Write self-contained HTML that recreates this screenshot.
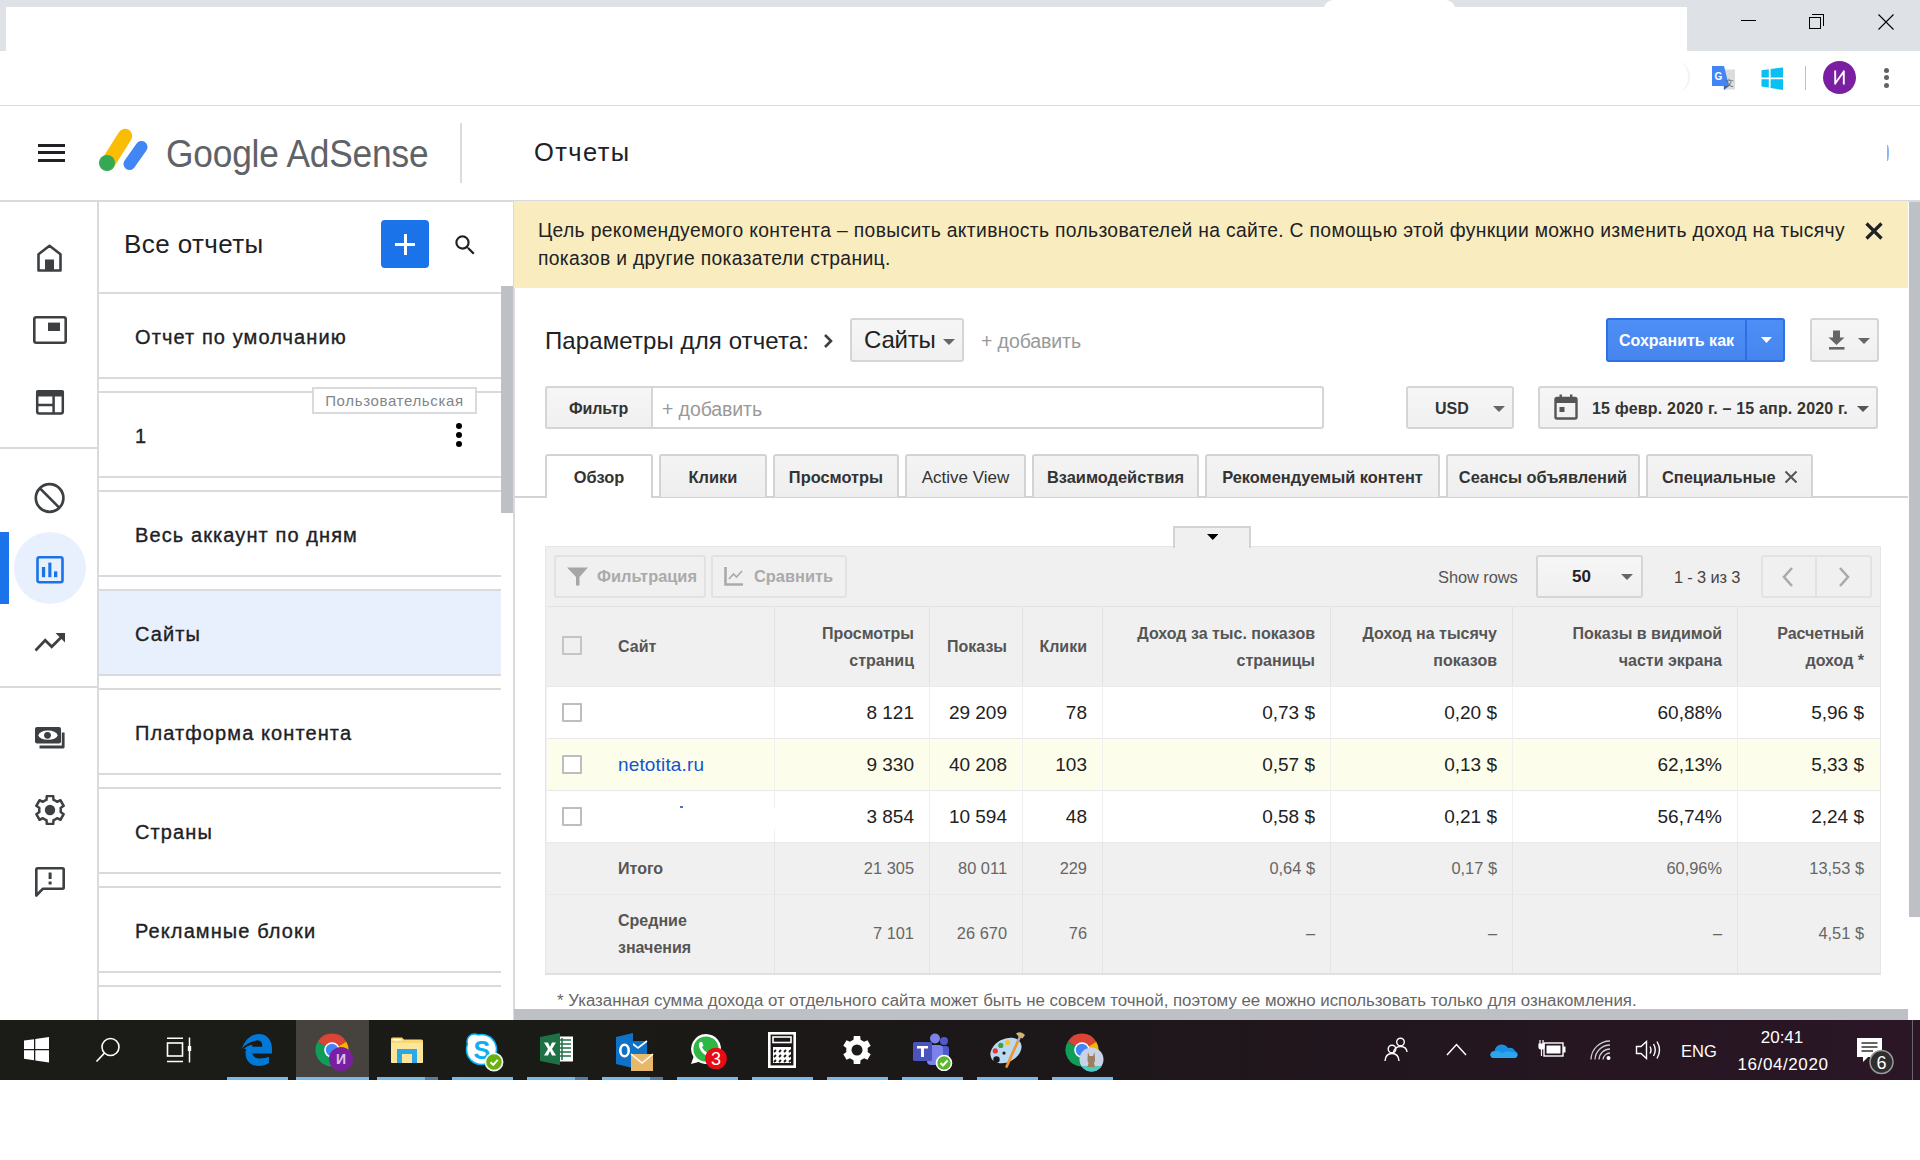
<!DOCTYPE html>
<html><head><meta charset="utf-8">
<style>
*{box-sizing:border-box;margin:0;padding:0}
html,body{width:1920px;height:1160px;overflow:hidden;background:#fff;font-family:"Liberation Sans",sans-serif;color:#202124}
.a{position:absolute}
.t{position:absolute;white-space:nowrap;line-height:1}
svg{display:block}
</style></head><body>
<!-- ===== BROWSER CHROME ===== -->
<div class="a" style="left:0;top:0;width:1920px;height:7px;background:#dee1e6"></div>
<div class="a" style="left:0;top:0;width:6px;height:51px;background:#dee1e6"></div>
<div class="a" style="left:1687px;top:0;width:233px;height:51px;background:#dee1e6"></div>
<div class="a" style="left:1324px;top:0;width:131px;height:10px;background:#fff;border-radius:9px 9px 0 0"></div>
<!-- window controls -->
<div class="a" style="left:1741px;top:20px;width:15px;height:1px;background:#000"></div>
<div class="a" style="left:1809px;top:17px;width:12px;height:12px;border:1px solid #000"></div>
<div class="a" style="left:1812px;top:14px;width:12px;height:12px;border-top:1px solid #000;border-right:1px solid #000"></div>
<svg class="a" style="left:1878px;top:14px" width="16" height="16"><path d="M0.5 0.5L15.5 15.5M15.5 0.5L0.5 15.5" stroke="#000" stroke-width="1.1"/></svg>
<!-- toolbar -->
<div class="a" style="left:1666px;top:62px;width:24px;height:30px;border-radius:50%;border-right:2px solid #f1f3f4"></div>
<svg class="a" style="left:1711px;top:65px" width="26" height="26" viewBox="0 0 26 26">
 <rect x="12" y="4.5" width="12" height="20" fill="#dcdcdc"/>
 <path d="M1 1H13L18 21H1Z" fill="#4285f4"/>
 <path d="M13 21L18 21L13 25Z" fill="#3367d6"/>
 <text x="7.5" y="15" font-size="10" font-weight="bold" fill="#fff" text-anchor="middle" font-family="Liberation Sans">G</text>
 <text x="18.5" y="21" font-size="9" fill="#5f6368" text-anchor="middle" font-family="Liberation Sans">文</text>
</svg>
<svg class="a" style="left:1761px;top:67px" width="23" height="24" viewBox="0 0 23 24"><path d="M0.5 3.2L7.8 2.3V10.5H0.5Z M9.6 2L22 0.5V10.5H9.6Z M0.5 12.3H7.8V20.6L0.5 19.6Z M9.6 12.3H22V23L9.6 21Z" fill="#0ac0f2"/></svg>
<div class="a" style="left:1805px;top:66px;width:1px;height:24px;background:#bdc1c6"></div>
<div class="a" style="left:1823px;top:61px;width:33px;height:33px;border-radius:50%;background:#7b1fa2"></div>
<svg class="a" style="left:1833px;top:70px" width="13" height="15" viewBox="0 0 13 15"><path d="M2.2 0.5V14.5M10.8 0.5V14.5M2.2 13.5L10.8 1.5" stroke="#fff" stroke-width="1.9" fill="none"/></svg>
<div class="a" style="left:1884px;top:68px;width:5px;height:5px;border-radius:50%;background:#5f6368"></div>
<div class="a" style="left:1884px;top:75px;width:5px;height:5px;border-radius:50%;background:#5f6368"></div>
<div class="a" style="left:1884px;top:83px;width:5px;height:5px;border-radius:50%;background:#5f6368"></div>
<div class="a" style="left:0;top:105px;width:1920px;height:1px;background:#dadce0"></div>

<!-- ===== ADSENSE HEADER ===== -->
<div class="a" style="left:37.5px;top:144px;width:27px;height:3px;background:#202124"></div>
<div class="a" style="left:37.5px;top:151px;width:27px;height:3px;background:#202124"></div>
<div class="a" style="left:37.5px;top:159px;width:27px;height:3px;background:#202124"></div>
<svg class="a" style="left:97px;top:126px" width="52" height="48" viewBox="0 0 52 48">
 <line x1="28" y1="10" x2="11" y2="37" stroke="#fbbc04" stroke-width="14.5" stroke-linecap="round"/>
 <line x1="44.5" y1="21" x2="32.5" y2="38" stroke="#4285f4" stroke-width="12" stroke-linecap="round"/>
 <circle cx="10" cy="37" r="8" fill="#34a853"/>
</svg>
<div class="t" style="left:166px;top:135px;font-size:38px;color:#5f6368;letter-spacing:-0.2px;transform:scaleX(0.929);transform-origin:0 0">Google AdSense</div>
<div class="a" style="left:460px;top:123px;width:2px;height:60px;background:#dadce0"></div>
<div class="t" style="left:534px;top:140px;font-size:25.5px;color:#202124;letter-spacing:1.4px">Отчеты</div>
<div class="a" style="left:1886px;top:145px;width:3px;height:16px;border-right:2px solid #8ab4f8;border-radius:0 50% 50% 0"></div>
<div class="a" style="left:0;top:200px;width:1920px;height:2px;background:#d9dadd"></div>

<!-- LEFT RAIL -->
<div class="a" style="left:97px;top:202px;width:2px;height:818px;background:#d9dadd"></div>
<div class="a" style="left:0;top:447px;width:97px;height:2px;background:#d9dadd"></div>
<div class="a" style="left:0;top:686px;width:97px;height:2px;background:#d9dadd"></div>
<svg class="a" style="left:34px;top:242px" width="32" height="32" viewBox="0 0 32 32">
 <path d="M4.5 28.5V12.2L15.5 3.8L26.5 12.2V28.5Z" fill="none" stroke="#3c4043" stroke-width="2.6" stroke-linejoin="round"/>
 <rect x="11" y="17.5" width="9" height="11" fill="#3c4043"/>
</svg>
<svg class="a" style="left:32px;top:314px" width="36" height="32" viewBox="0 0 36 32">
 <rect x="2.3" y="3.3" width="31.4" height="25.4" rx="2" fill="none" stroke="#3c4043" stroke-width="2.6"/>
 <rect x="16" y="8.6" width="12" height="8.4" fill="#3c4043"/>
</svg>
<svg class="a" style="left:34px;top:388px" width="32" height="28" viewBox="0 0 32 28">
 <rect x="3.2" y="3.2" width="25.6" height="22.2" rx="2" fill="none" stroke="#3c4043" stroke-width="2.5"/>
 <rect x="2" y="2" width="28" height="6.5" rx="2" fill="#3c4043"/>
 <path d="M3 17H19.6M19.6 8V25" stroke="#3c4043" stroke-width="2.5"/>
</svg>
<svg class="a" style="left:33px;top:481px" width="34" height="34" viewBox="0 0 34 34">
 <circle cx="16.6" cy="17" r="13.8" fill="none" stroke="#3c4043" stroke-width="2.7"/>
 <path d="M7 7.4L26.2 26.6" stroke="#3c4043" stroke-width="2.7"/>
</svg>
<div class="a" style="left:0;top:532px;width:9px;height:72px;background:#1a73e8"></div>
<div class="a" style="left:14px;top:532px;width:72px;height:72px;border-radius:50%;background:#e8f0fe"></div>
<svg class="a" style="left:34px;top:554px" width="32" height="32" viewBox="0 0 32 32">
 <rect x="3.5" y="3.3" width="25" height="25" rx="2" fill="none" stroke="#1a73e8" stroke-width="2.6"/>
 <rect x="7.9" y="13" width="3.3" height="10.2" fill="#1a73e8"/>
 <rect x="14.3" y="8.6" width="3.1" height="14.6" fill="#1a73e8"/>
 <rect x="20" y="17.4" width="3.3" height="5.8" fill="#1a73e8"/>
</svg>
<svg class="a" style="left:33px;top:630px" width="34" height="24" viewBox="0 0 34 24">
 <path d="M2.5 20.5L12.2 10.2L18.7 16.8L30.5 5" fill="none" stroke="#3c4043" stroke-width="2.7"/>
 <path d="M22.5 3H32V12.5Z" fill="#3c4043"/>
</svg>
<svg class="a" style="left:33px;top:725px" width="34" height="26" viewBox="0 0 34 26">
 <rect x="2" y="2" width="26" height="16.5" rx="2" fill="#3c4043"/>
 <ellipse cx="15" cy="10.2" rx="9.5" ry="4.6" fill="#fff"/>
 <circle cx="14.5" cy="10.3" r="3.4" fill="#3c4043"/>
 <path d="M6.5 22H30.2V7.5" fill="none" stroke="#3c4043" stroke-width="2.8" stroke-linejoin="round"/>
</svg>
<svg class="a" style="left:35px;top:795px" width="30" height="30" viewBox="0 0 30 30">
 <path d="M9.60 5.65 L11.48 4.79 L11.78 1.07 L18.22 1.07 L18.52 4.79 L20.40 5.65 L22.09 6.85 L25.46 5.25 L28.68 10.82 L25.60 12.94 L25.80 15.00 L25.60 17.06 L28.68 19.18 L25.46 24.75 L22.09 23.15 L20.40 24.35 L18.52 25.21 L18.22 28.93 L11.78 28.93 L11.48 25.21 L9.60 24.35 L7.91 23.15 L4.54 24.75 L1.32 19.18 L4.40 17.06 L4.20 15.00 L4.40 12.94 L1.32 10.82 L4.54 5.25 L7.91 6.85Z" fill="none" stroke="#3c4043" stroke-width="2.5" stroke-linejoin="round"/>
 <circle cx="15" cy="15" r="5.2" fill="#3c4043"/>
</svg>
<svg class="a" style="left:34px;top:866px" width="32" height="32" viewBox="0 0 32 32">
 <path d="M2.3 29.5V3.5Q2.3 2.3 3.5 2.3H28.5Q29.7 2.3 29.7 3.5V21.5Q29.7 22.7 28.5 22.7H9Z" fill="none" stroke="#3c4043" stroke-width="2.6" stroke-linejoin="round"/>
 <rect x="14.6" y="6.5" width="3" height="6.5" fill="#3c4043"/>
 <rect x="14.6" y="15.5" width="3" height="3" fill="#3c4043"/>
</svg>


<!-- SIDEBAR -->
<div class="a" style="left:99px;top:202px;width:414px;height:818px;background:#fff;overflow:hidden">
<div class="t" style="left:25px;top:29px;font-size:26px;color:#202124;letter-spacing:0.4px">Все отчеты</div>
<div class="a" style="left:282px;top:18px;width:48px;height:48px;border-radius:4px;background:#1a73e8"></div>
<div class="a" style="left:296px;top:41px;width:20px;height:3px;background:#fff"></div>
<div class="a" style="left:304.5px;top:32px;width:3px;height:21px;background:#fff"></div>
<svg class="a" style="left:352.5px;top:29.5px" width="26.5" height="26.5" viewBox="0 0 24 24"><path fill="#202124" d="M15.5 14h-.79l-.28-.27A6.47 6.47 0 0 0 16 9.5 6.5 6.5 0 1 0 9.5 16c1.61 0 3.09-.59 4.23-1.57l.27.28v.79l5 4.99L20.49 19l-4.99-5zm-6 0C7.01 14 5 11.990 5 9.5S7.01 5 9.5 5 14 7.01 14 9.5 11.99 14 9.5 14z"/></svg>
<div class="a" style="left:0;top:90px;width:402px;height:87px;border-top:2px solid #d9dadd;border-bottom:2px solid #d9dadd;background:#fff"></div>
<div class="t" style="left:36px;top:125.1px;font-size:20px;color:#202124;letter-spacing:1.1px;-webkit-text-stroke:0.35px #202124">Отчет по умолчанию</div>
<div class="a" style="left:0;top:189px;width:402px;height:87px;border-top:2px solid #d9dadd;border-bottom:2px solid #d9dadd;background:#fff"></div>
<div class="t" style="left:36px;top:224.1px;font-size:20px;color:#202124;letter-spacing:1.1px;-webkit-text-stroke:0.35px #202124">1</div>
<div class="a" style="left:213px;top:185px;width:165px;height:27px;border:2px solid #d9dadd;background:#fff"></div>
<div class="t" style="left:213px;top:191px;width:165px;text-align:center;font-size:15px;color:#80868b;letter-spacing:0.65px">Пользовательская</div>
<div class="a" style="left:357px;top:221px;width:6px;height:6px;border-radius:50%;background:#000"></div>
<div class="a" style="left:357px;top:230px;width:6px;height:6px;border-radius:50%;background:#000"></div>
<div class="a" style="left:357px;top:239px;width:6px;height:6px;border-radius:50%;background:#000"></div>
<div class="a" style="left:0;top:288px;width:402px;height:87px;border-top:2px solid #d9dadd;border-bottom:2px solid #d9dadd;background:#fff"></div>
<div class="t" style="left:36px;top:323.1px;font-size:20px;color:#202124;letter-spacing:1.1px;-webkit-text-stroke:0.35px #202124">Весь аккаунт по дням</div>
<div class="a" style="left:0;top:387px;width:402px;height:87px;border-top:2px solid #d9dadd;border-bottom:2px solid #d9dadd;background:#e8f0fe"></div>
<div class="t" style="left:36px;top:422.1px;font-size:20px;color:#202124;letter-spacing:1.1px;-webkit-text-stroke:0.35px #202124">Сайты</div>
<div class="a" style="left:0;top:486px;width:402px;height:87px;border-top:2px solid #d9dadd;border-bottom:2px solid #d9dadd;background:#fff"></div>
<div class="t" style="left:36px;top:521.1px;font-size:20px;color:#202124;letter-spacing:1.1px;-webkit-text-stroke:0.35px #202124">Платформа контента</div>
<div class="a" style="left:0;top:585px;width:402px;height:87px;border-top:2px solid #d9dadd;border-bottom:2px solid #d9dadd;background:#fff"></div>
<div class="t" style="left:36px;top:620.1px;font-size:20px;color:#202124;letter-spacing:1.1px;-webkit-text-stroke:0.35px #202124">Страны</div>
<div class="a" style="left:0;top:684px;width:402px;height:87px;border-top:2px solid #d9dadd;border-bottom:2px solid #d9dadd;background:#fff"></div>
<div class="t" style="left:36px;top:719.1px;font-size:20px;color:#202124;letter-spacing:1.1px;-webkit-text-stroke:0.35px #202124">Рекламные блоки</div>
<div class="a" style="left:0;top:783px;width:402px;height:87px;border-top:2px solid #d9dadd;border-bottom:2px solid #d9dadd;background:#fff"></div>
<div class="a" style="left:402px;top:84px;width:12px;height:227px;background:#bdc1c6"></div>
</div>
<div class="a" style="left:513px;top:202px;width:2px;height:818px;background:#d9dadd"></div>
<!-- MAIN -->
<div class="a" style="left:514px;top:201px;width:1394px;height:87px;background:#f9ecbe"></div>
<div class="t" style="left:538px;top:221.2px;font-size:19.3px;color:#202124;letter-spacing:0.34px">Цель рекомендуемого контента – повысить активность пользователей на сайте. С помощью этой функции можно изменить доход на тысячу</div>
<div class="t" style="left:538px;top:249.0px;font-size:19.3px;color:#202124;letter-spacing:0.34px">показов и другие показатели страниц.</div>
<svg class="a" style="left:1864px;top:221px" width="20" height="20" viewBox="0 0 20 20"><path d="M2.5 2.5L17.5 17.5M17.5 2.5L2.5 17.5" stroke="#202124" stroke-width="3.2"/></svg>
<div class="t" style="left:545px;top:328.7px;font-size:24px;color:#202124;letter-spacing:0.1px">Параметры для отчета:</div>
<svg class="a" style="left:822px;top:333px" width="12" height="16" viewBox="0 0 12 16"><path d="M3 2L9 8L3 14" fill="none" stroke="#3c4043" stroke-width="2.6"/></svg>
<div class="a" style="left:850px;top:318px;width:114px;height:44px;border:2px solid #d5d5d5;border-radius:3px;background:linear-gradient(#f6f6f6,#f0f0f0)"></div>
<div class="t" style="left:864px;top:327.7px;font-size:24px;color:#222;letter-spacing:-0.2px">Сайты</div>
<svg class="a" style="left:943px;top:339px" width="12" height="6" viewBox="0 0 12 6"><path d="M0 0H12L6.0 6Z" fill="#666"/></svg>
<div class="t" style="left:981px;top:331.5px;font-size:19.5px;color:#999;letter-spacing:-0.1px">+ добавить</div>
<div class="a" style="left:1606px;top:318px;width:179px;height:44px;background:linear-gradient(#4d8ff6,#4685ee);border:2px solid #2f6fe4;border-radius:3px"></div>
<div class="a" style="left:1745px;top:319px;width:2px;height:42px;background:#2f6fe4"></div>
<div class="t" style="left:1619px;top:332.5px;font-size:16px;color:#fff;font-weight:bold;">Сохранить как</div>
<svg class="a" style="left:1761px;top:337px" width="11" height="6" viewBox="0 0 11 6"><path d="M0 0H11L5.5 6Z" fill="#fff"/></svg>
<div class="a" style="left:1810px;top:318px;width:69px;height:44px;border:2px solid #d5d5d5;border-radius:3px;background:linear-gradient(#f6f6f6,#f0f0f0)"></div>
<svg class="a" style="left:1828px;top:330px" width="18" height="21" viewBox="0 0 18 21"><path d="M5 0.5H12V7.5H16.5L8.5 15L0.5 7.5H5Z" fill="#666"/><rect x="1" y="17" width="15.5" height="2.6" fill="#666"/></svg>
<svg class="a" style="left:1858px;top:338px" width="12" height="6" viewBox="0 0 12 6"><path d="M0 0H12L6.0 6Z" fill="#666"/></svg>
<div class="a" style="left:545px;top:386px;width:779px;height:43px;border:2px solid #d5d5d5;border-radius:3px;background:#fff"></div>
<div class="a" style="left:545px;top:386px;width:108px;height:43px;border:2px solid #d5d5d5;border-radius:3px 0 0 3px;background:linear-gradient(#f6f6f6,#f0f0f0)"></div>
<div class="t" style="left:569px;top:401.0px;font-size:16px;color:#333;font-weight:bold;letter-spacing:-0.1px">Фильтр</div>
<div class="t" style="left:662px;top:399.5px;font-size:19.5px;color:#999;letter-spacing:-0.1px">+ добавить</div>
<div class="a" style="left:1406px;top:386px;width:108px;height:43px;border:2px solid #d5d5d5;border-radius:3px;background:linear-gradient(#f6f6f6,#f0f0f0)"></div>
<div class="t" style="left:1435px;top:401.0px;font-size:16px;color:#333;font-weight:bold;">USD</div>
<svg class="a" style="left:1493px;top:406px" width="12" height="6" viewBox="0 0 12 6"><path d="M0 0H12L6.0 6Z" fill="#666"/></svg>
<div class="a" style="left:1538px;top:386px;width:340px;height:43px;border:2px solid #d5d5d5;border-radius:3px;background:linear-gradient(#f6f6f6,#f0f0f0)"></div>
<svg class="a" style="left:1553px;top:393px" width="26" height="28" viewBox="0 0 26 28"><rect x="2.5" y="5" width="21" height="20.5" rx="1.5" fill="none" stroke="#555" stroke-width="2.4"/><rect x="2" y="5" width="22" height="5" fill="#555"/><rect x="6.5" y="1.5" width="2.4" height="5" fill="#555"/><rect x="17" y="1.5" width="2.4" height="5" fill="#555"/><rect x="6.5" y="14" width="5" height="5" fill="#555"/></svg>
<div class="t" style="left:1592px;top:401.0px;font-size:16px;color:#333;font-weight:bold;letter-spacing:0.18px">15 февр. 2020 г. – 15 апр. 2020 г.</div>
<svg class="a" style="left:1857px;top:406px" width="12" height="6" viewBox="0 0 12 6"><path d="M0 0H12L6.0 6Z" fill="#555"/></svg>
<div class="a" style="left:515px;top:496px;width:1393px;height:2px;background:#d3d3d3"></div>
<div class="a" style="left:545px;top:454px;width:108px;height:44px;background:#fff;border:2px solid #d3d3d3;border-bottom:none;border-radius:3px 3px 0 0"></div>
<div class="t" style="left:545px;width:108px;text-align:center;top:469.4px;font-size:16.4px;color:#333;font-weight:bold;">Обзор</div>
<div class="a" style="left:659px;top:454px;width:108px;height:43px;background:linear-gradient(#f4f4f4,#eeeeee);border:2px solid #d3d3d3;border-bottom:none;border-radius:3px 3px 0 0"></div>
<div class="t" style="left:659px;width:108px;text-align:center;top:469.4px;font-size:16.4px;color:#333;font-weight:bold;">Клики</div>
<div class="a" style="left:773px;top:454px;width:126px;height:43px;background:linear-gradient(#f4f4f4,#eeeeee);border:2px solid #d3d3d3;border-bottom:none;border-radius:3px 3px 0 0"></div>
<div class="t" style="left:773px;width:126px;text-align:center;top:469.4px;font-size:16.4px;color:#333;font-weight:bold;">Просмотры</div>
<div class="a" style="left:905px;top:454px;width:121px;height:43px;background:linear-gradient(#f4f4f4,#eeeeee);border:2px solid #d3d3d3;border-bottom:none;border-radius:3px 3px 0 0"></div>
<div class="t" style="left:905px;width:121px;text-align:center;top:468.9px;font-size:17px;color:#333;">Active View</div>
<div class="a" style="left:1032px;top:454px;width:167px;height:43px;background:linear-gradient(#f4f4f4,#eeeeee);border:2px solid #d3d3d3;border-bottom:none;border-radius:3px 3px 0 0"></div>
<div class="t" style="left:1032px;width:167px;text-align:center;top:469.4px;font-size:16.4px;color:#333;font-weight:bold;">Взаимодействия</div>
<div class="a" style="left:1205px;top:454px;width:235px;height:43px;background:linear-gradient(#f4f4f4,#eeeeee);border:2px solid #d3d3d3;border-bottom:none;border-radius:3px 3px 0 0"></div>
<div class="t" style="left:1205px;width:235px;text-align:center;top:469.4px;font-size:16.4px;color:#333;font-weight:bold;">Рекомендуемый контент</div>
<div class="a" style="left:1446px;top:454px;width:194px;height:43px;background:linear-gradient(#f4f4f4,#eeeeee);border:2px solid #d3d3d3;border-bottom:none;border-radius:3px 3px 0 0"></div>
<div class="t" style="left:1446px;width:194px;text-align:center;top:469.4px;font-size:16.4px;color:#333;font-weight:bold;">Сеансы объявлений</div>
<div class="a" style="left:1646px;top:454px;width:167px;height:43px;background:linear-gradient(#f4f4f4,#eeeeee);border:2px solid #d3d3d3;border-bottom:none;border-radius:3px 3px 0 0"></div>
<div class="t" style="left:1662px;top:469.4px;font-size:16.4px;color:#333;font-weight:bold;">Специальные</div>
<svg class="a" style="left:1784px;top:470px" width="14" height="14" viewBox="0 0 14 14"><path d="M1.5 1.5L12.5 12.5M12.5 1.5L1.5 12.5" stroke="#555" stroke-width="2"/></svg>
<div class="a" style="left:545px;top:546px;width:1336px;height:429px;background:#f0f0f0;border:1px solid #e6e6e6;border-bottom:2px solid #e0e0e0"></div>
<div class="a" style="left:1173px;top:526px;width:78px;height:22px;background:#f0f0f0;border:2px solid #d3d3d3;border-bottom:none"></div>
<svg class="a" style="left:1206.5px;top:534px" width="11.5" height="6" viewBox="0 0 11.5 6"><path d="M0 0H11.5L5.75 6Z" fill="#000"/></svg>
<div class="a" style="left:554px;top:555px;width:152px;height:43px;border:2px solid #e2e2e2;border-radius:3px;background:#f0f0f0"></div>
<svg class="a" style="left:566px;top:566px" width="23" height="21" viewBox="0 0 23 21"><path d="M1 1.5H22L13.5 11V19.5H10V11Z" fill="#a6a6a6"/></svg>
<div class="t" style="left:597px;top:567.7px;font-size:16.4px;color:#aaa;font-weight:bold;">Фильтрация</div>
<div class="a" style="left:711px;top:555px;width:136px;height:43px;border:2px solid #e2e2e2;border-radius:3px;background:#f0f0f0"></div>
<svg class="a" style="left:723px;top:565px" width="22" height="22" viewBox="0 0 22 22"><path d="M2.5 2V19.5H20" fill="none" stroke="#aaa" stroke-width="2.6"/><path d="M6 14L10.5 9L13.5 12L19 6" fill="none" stroke="#aaa" stroke-width="1.6"/></svg>
<div class="t" style="left:754px;top:567.7px;font-size:16.4px;color:#aaa;font-weight:bold;">Сравнить</div>
<div class="t" style="left:1438px;top:569.1px;font-size:16.4px;color:#555;letter-spacing:-0.05px">Show rows</div>
<div class="a" style="left:1536px;top:555px;width:107px;height:43px;border:2px solid #d5d5d5;border-radius:3px;background:linear-gradient(#f6f6f6,#f0f0f0)"></div>
<div class="t" style="left:1572px;top:567.6px;font-size:17px;color:#222;font-weight:bold;">50</div>
<svg class="a" style="left:1621px;top:574px" width="12" height="6" viewBox="0 0 12 6"><path d="M0 0H12L6.0 6Z" fill="#666"/></svg>
<div class="t" style="left:1674px;top:569.1px;font-size:16.4px;color:#444;letter-spacing:-0.15px">1 - 3 из 3</div>
<div class="a" style="left:1761px;top:555px;width:111px;height:43px;border:2px solid #e2e2e2;border-radius:3px;background:#f0f0f0"></div>
<div class="a" style="left:1815px;top:556px;width:2px;height:41px;background:#e2e2e2"></div>
<svg class="a" style="left:1780px;top:566px" width="16" height="22" viewBox="0 0 16 22"><path d="M12 2L4 11L12 20" fill="none" stroke="#aaa" stroke-width="2.6"/></svg>
<svg class="a" style="left:1836px;top:566px" width="16" height="22" viewBox="0 0 16 22"><path d="M4 2L12 11L4 20" fill="none" stroke="#aaa" stroke-width="2.6"/></svg>
<div class="a" style="left:547px;top:606px;width:1333px;height:1px;background:#e3e3e3"></div>
<div class="a" style="left:547px;top:686px;width:1333px;height:52px;background:#fff"></div>
<div class="a" style="left:547px;top:738px;width:1333px;height:52px;background:#fdfdec"></div>
<div class="a" style="left:547px;top:790px;width:1333px;height:52px;background:#fff"></div>
<div class="a" style="left:547px;top:686px;width:1333px;height:1px;background:#e9e9e9"></div>
<div class="a" style="left:547px;top:738px;width:1333px;height:1px;background:#e9e9e9"></div>
<div class="a" style="left:547px;top:790px;width:1333px;height:1px;background:#e9e9e9"></div>
<div class="a" style="left:547px;top:842px;width:1333px;height:1px;background:#e9e9e9"></div>
<div class="a" style="left:547px;top:894px;width:1333px;height:1px;background:#e9e9e9"></div>
<div class="a" style="left:774px;top:607px;width:1px;height:79px;background:#e2e2e2"></div>
<div class="a" style="left:774px;top:686px;width:1px;height:156px;background:#f0f0f0"></div>
<div class="a" style="left:774px;top:842px;width:1px;height:131px;background:#e4e4e4"></div>
<div class="a" style="left:929px;top:607px;width:1px;height:79px;background:#e2e2e2"></div>
<div class="a" style="left:929px;top:686px;width:1px;height:156px;background:#f0f0f0"></div>
<div class="a" style="left:929px;top:842px;width:1px;height:131px;background:#e4e4e4"></div>
<div class="a" style="left:1022px;top:607px;width:1px;height:79px;background:#e2e2e2"></div>
<div class="a" style="left:1022px;top:686px;width:1px;height:156px;background:#f0f0f0"></div>
<div class="a" style="left:1022px;top:842px;width:1px;height:131px;background:#e4e4e4"></div>
<div class="a" style="left:1102px;top:607px;width:1px;height:79px;background:#e2e2e2"></div>
<div class="a" style="left:1102px;top:686px;width:1px;height:156px;background:#f0f0f0"></div>
<div class="a" style="left:1102px;top:842px;width:1px;height:131px;background:#e4e4e4"></div>
<div class="a" style="left:1330px;top:607px;width:1px;height:79px;background:#e2e2e2"></div>
<div class="a" style="left:1330px;top:686px;width:1px;height:156px;background:#f0f0f0"></div>
<div class="a" style="left:1330px;top:842px;width:1px;height:131px;background:#e4e4e4"></div>
<div class="a" style="left:1512px;top:607px;width:1px;height:79px;background:#e2e2e2"></div>
<div class="a" style="left:1512px;top:686px;width:1px;height:156px;background:#f0f0f0"></div>
<div class="a" style="left:1512px;top:842px;width:1px;height:131px;background:#e4e4e4"></div>
<div class="a" style="left:1737px;top:607px;width:1px;height:79px;background:#e2e2e2"></div>
<div class="a" style="left:1737px;top:686px;width:1px;height:156px;background:#f0f0f0"></div>
<div class="a" style="left:1737px;top:842px;width:1px;height:131px;background:#e4e4e4"></div>
<div class="a" style="left:770px;top:808px;width:6px;height:21px;background:#fff"></div>
<div class="a" style="left:680px;top:806px;width:3px;height:1.5px;background:#5570c0"></div>
<div class="a" style="left:562px;top:636px;width:20px;height:19px;border:2px solid #c4c4c4;border-radius:1px;background:#f0f0f0"></div>
<div class="a" style="left:562px;top:703px;width:20px;height:19px;border:2px solid #bdbdbd;border-radius:1px;background:#fff"></div>
<div class="a" style="left:562px;top:755px;width:20px;height:19px;border:2px solid #bdbdbd;border-radius:1px;background:#fff"></div>
<div class="a" style="left:562px;top:807px;width:20px;height:19px;border:2px solid #bdbdbd;border-radius:1px;background:#fff"></div>
<div class="t" style="left:618px;top:638.5px;font-size:16px;color:#555;font-weight:bold;">Сайт</div>
<div class="t" style="left:514px;width:400px;text-align:right;top:625.5px;font-size:16px;color:#555;font-weight:bold;">Просмотры</div>
<div class="t" style="left:514px;width:400px;text-align:right;top:652.5px;font-size:16px;color:#555;font-weight:bold;">страниц</div>
<div class="t" style="left:607px;width:400px;text-align:right;top:638.5px;font-size:16px;color:#555;font-weight:bold;">Показы</div>
<div class="t" style="left:687px;width:400px;text-align:right;top:638.5px;font-size:16px;color:#555;font-weight:bold;">Клики</div>
<div class="t" style="left:915px;width:400px;text-align:right;top:625.5px;font-size:16px;color:#555;font-weight:bold;">Доход за тыс. показов</div>
<div class="t" style="left:915px;width:400px;text-align:right;top:652.5px;font-size:16px;color:#555;font-weight:bold;">страницы</div>
<div class="t" style="left:1097px;width:400px;text-align:right;top:625.5px;font-size:16px;color:#555;font-weight:bold;">Доход на тысячу</div>
<div class="t" style="left:1097px;width:400px;text-align:right;top:652.5px;font-size:16px;color:#555;font-weight:bold;">показов</div>
<div class="t" style="left:1322px;width:400px;text-align:right;top:625.5px;font-size:16px;color:#555;font-weight:bold;">Показы в видимой</div>
<div class="t" style="left:1322px;width:400px;text-align:right;top:652.5px;font-size:16px;color:#555;font-weight:bold;">части экрана</div>
<div class="t" style="left:1464px;width:400px;text-align:right;top:625.5px;font-size:16px;color:#555;font-weight:bold;">Расчетный</div>
<div class="t" style="left:1464px;width:400px;text-align:right;top:652.5px;font-size:16px;color:#555;font-weight:bold;">доход *</div>
<div class="t" style="left:514px;width:400px;text-align:right;top:702.9px;font-size:19px;color:#222;">8 121</div>
<div class="t" style="left:607px;width:400px;text-align:right;top:702.9px;font-size:19px;color:#222;">29 209</div>
<div class="t" style="left:687px;width:400px;text-align:right;top:702.9px;font-size:19px;color:#222;">78</div>
<div class="t" style="left:915px;width:400px;text-align:right;top:702.9px;font-size:19px;color:#222;">0,73 $</div>
<div class="t" style="left:1097px;width:400px;text-align:right;top:702.9px;font-size:19px;color:#222;">0,20 $</div>
<div class="t" style="left:1322px;width:400px;text-align:right;top:702.9px;font-size:19px;color:#222;">60,88%</div>
<div class="t" style="left:1464px;width:400px;text-align:right;top:702.9px;font-size:19px;color:#222;">5,96 $</div>
<div class="t" style="left:618px;top:754.9px;font-size:19px;color:#1155cc;letter-spacing:0.15px">netotita.ru</div>
<div class="t" style="left:514px;width:400px;text-align:right;top:754.9px;font-size:19px;color:#222;">9 330</div>
<div class="t" style="left:607px;width:400px;text-align:right;top:754.9px;font-size:19px;color:#222;">40 208</div>
<div class="t" style="left:687px;width:400px;text-align:right;top:754.9px;font-size:19px;color:#222;">103</div>
<div class="t" style="left:915px;width:400px;text-align:right;top:754.9px;font-size:19px;color:#222;">0,57 $</div>
<div class="t" style="left:1097px;width:400px;text-align:right;top:754.9px;font-size:19px;color:#222;">0,13 $</div>
<div class="t" style="left:1322px;width:400px;text-align:right;top:754.9px;font-size:19px;color:#222;">62,13%</div>
<div class="t" style="left:1464px;width:400px;text-align:right;top:754.9px;font-size:19px;color:#222;">5,33 $</div>
<div class="t" style="left:514px;width:400px;text-align:right;top:806.9px;font-size:19px;color:#222;">3 854</div>
<div class="t" style="left:607px;width:400px;text-align:right;top:806.9px;font-size:19px;color:#222;">10 594</div>
<div class="t" style="left:687px;width:400px;text-align:right;top:806.9px;font-size:19px;color:#222;">48</div>
<div class="t" style="left:915px;width:400px;text-align:right;top:806.9px;font-size:19px;color:#222;">0,58 $</div>
<div class="t" style="left:1097px;width:400px;text-align:right;top:806.9px;font-size:19px;color:#222;">0,21 $</div>
<div class="t" style="left:1322px;width:400px;text-align:right;top:806.9px;font-size:19px;color:#222;">56,74%</div>
<div class="t" style="left:1464px;width:400px;text-align:right;top:806.9px;font-size:19px;color:#222;">2,24 $</div>
<div class="t" style="left:618px;top:860.5px;font-size:16px;color:#555;font-weight:bold;">Итого</div>
<div class="t" style="left:514px;width:400px;text-align:right;top:860.1px;font-size:16.4px;color:#666;">21 305</div>
<div class="t" style="left:607px;width:400px;text-align:right;top:860.1px;font-size:16.4px;color:#666;">80 011</div>
<div class="t" style="left:687px;width:400px;text-align:right;top:860.1px;font-size:16.4px;color:#666;">229</div>
<div class="t" style="left:915px;width:400px;text-align:right;top:860.1px;font-size:16.4px;color:#666;">0,64 $</div>
<div class="t" style="left:1097px;width:400px;text-align:right;top:860.1px;font-size:16.4px;color:#666;">0,17 $</div>
<div class="t" style="left:1322px;width:400px;text-align:right;top:860.1px;font-size:16.4px;color:#666;">60,96%</div>
<div class="t" style="left:1464px;width:400px;text-align:right;top:860.1px;font-size:16.4px;color:#666;">13,53 $</div>
<div class="t" style="left:618px;top:912.5px;font-size:16px;color:#555;font-weight:bold;">Средние</div>
<div class="t" style="left:618px;top:939.5px;font-size:16px;color:#555;font-weight:bold;">значения</div>
<div class="t" style="left:514px;width:400px;text-align:right;top:925.1px;font-size:16.4px;color:#666;">7 101</div>
<div class="t" style="left:607px;width:400px;text-align:right;top:925.1px;font-size:16.4px;color:#666;">26 670</div>
<div class="t" style="left:687px;width:400px;text-align:right;top:925.1px;font-size:16.4px;color:#666;">76</div>
<div class="t" style="left:915px;width:400px;text-align:right;top:925.1px;font-size:16.4px;color:#666;">–</div>
<div class="t" style="left:1097px;width:400px;text-align:right;top:925.1px;font-size:16.4px;color:#666;">–</div>
<div class="t" style="left:1322px;width:400px;text-align:right;top:925.1px;font-size:16.4px;color:#666;">–</div>
<div class="t" style="left:1464px;width:400px;text-align:right;top:925.1px;font-size:16.4px;color:#666;">4,51 $</div>
<div class="t" style="left:557px;top:993.0px;font-size:16.85px;color:#666;">* Указанная сумма дохода от отдельного сайта может быть не совсем точной, поэтому ее можно использовать только для ознакомления.</div>
<div class="a" style="left:514px;top:1009px;width:1394px;height:11px;background:#bdc1c6"></div>
<div class="a" style="left:1908px;top:202px;width:12px;height:818px;background:#fff"></div>
<div class="a" style="left:1909px;top:202px;width:11px;height:715px;background:#bdc1c6"></div>
<!-- TASKBAR -->
<div class="a" style="left:0;top:1020px;width:1920px;height:60px;background:linear-gradient(90deg,#1b1c17 0%,#1a1a16 30%,#1c1719 55%,#23161f 75%,#2b1626 100%)"></div>
<div class="a" style="left:296px;top:1020px;width:73px;height:57px;background:#46433e"></div>
<div class="a" style="left:227px;top:1077px;width:61px;height:3px;background:#76b9ed"></div>
<div class="a" style="left:296px;top:1077px;width:73px;height:3px;background:#76b9ed"></div>
<div class="a" style="left:377px;top:1077px;width:61px;height:3px;background:#76b9ed"></div>
<div class="a" style="left:452px;top:1077px;width:61px;height:3px;background:#76b9ed"></div>
<div class="a" style="left:527px;top:1077px;width:61px;height:3px;background:#76b9ed"></div>
<div class="a" style="left:602px;top:1077px;width:61px;height:3px;background:#76b9ed"></div>
<div class="a" style="left:677px;top:1077px;width:61px;height:3px;background:#76b9ed"></div>
<div class="a" style="left:752px;top:1077px;width:61px;height:3px;background:#76b9ed"></div>
<div class="a" style="left:827px;top:1077px;width:61px;height:3px;background:#76b9ed"></div>
<div class="a" style="left:902px;top:1077px;width:61px;height:3px;background:#76b9ed"></div>
<div class="a" style="left:977px;top:1077px;width:61px;height:3px;background:#76b9ed"></div>
<div class="a" style="left:1052px;top:1077px;width:61px;height:3px;background:#76b9ed"></div>
<div class="a" style="left:425px;top:1077px;width:13px;height:3px;background:#4f7fa6"></div>
<div class="a" style="left:575px;top:1077px;width:13px;height:3px;background:#4f7fa6"></div>
<div class="a" style="left:650px;top:1077px;width:13px;height:3px;background:#4f7fa6"></div>
<svg class="a" style="left:24px;top:1037px" width="25" height="26" viewBox="0 0 25 26"><path d="M0 3.6L10 2.2V12H0Z M11.3 2L25 0V12H11.3Z M0 13.3H10V23.2L0 21.8Z M11.3 13.3H25V25.5L11.3 23.5Z" fill="#fff"/></svg>
<svg class="a" style="left:95px;top:1037px" width="27" height="26" viewBox="0 0 27 26"><circle cx="15.5" cy="10" r="8.5" fill="none" stroke="#fff" stroke-width="1.6"/><path d="M9.5 16L1.5 24.5" stroke="#fff" stroke-width="1.8"/></svg>
<svg class="a" style="left:166px;top:1037px" width="28" height="26" viewBox="0 0 28 26"><rect x="1.5" y="6" width="15" height="13" fill="none" stroke="#fff" stroke-width="1.6"/><path d="M1 1.3H17M1 24.5H17M23.5 0.5V25.5" stroke="#fff" stroke-width="1.5"/><rect x="21.8" y="9" width="3.4" height="5" fill="#fff"/></svg>
<svg class="a" style="left:230px;top:1025px" width="60" height="50" viewBox="0 0 60 50"><path d="M12 23.5C15 14 22 9 29 9C37 9 42 15 42 24V28.4H22.3C23 31.5 26 33.5 30 33.5C33.5 33.5 36.5 32.8 39 31.8V38C36 40 32 41 28.5 41C20 41 15.5 35 15.5 28C15.5 26 15.8 25 16.2 24C14.5 24 13 23.8 12 23.5Z" fill="#0078d7"/><path d="M22.2 21.8V17.8C23.5 16 25 15.3 27.5 15.3C30.5 15.3 32.1 17.5 32.1 19.5V21.8Z" fill="#1c1a16"/><path d="M12 23.5C15.5 19.3 19.5 17 23.8 16.4L22.2 19.8C19 20.3 15.8 21.9 13 24.6Z" fill="#1c1a16"/></svg>
<svg class="a" style="left:315px;top:1033px" width="34" height="34" viewBox="0 0 34 34">
<path d="M17 17L2.71 8.75A16.5 16.5 0 0 1 31.29 8.75Z" fill="#db4437"/>
<path d="M17 17L31.29 8.75A16.5 16.5 0 0 1 17 33.5Z" fill="#f4b400"/>
<path d="M17 17L17 33.5A16.5 16.5 0 0 1 2.71 8.75Z" fill="#0f9d58"/>
<circle cx="17" cy="17" r="7.8" fill="#fff"/><circle cx="17" cy="17" r="6.2" fill="#4285f4"/></svg>
<div class="a" style="left:329px;top:1047px;width:24px;height:24px;border-radius:50%;background:#7b1fa2"></div>
<div class="t" style="left:329px;top:1051.5px;width:24px;text-align:center;font-size:14px;color:#dcc4e8;font-weight:bold">И</div>
<svg class="a" style="left:390px;top:1036px" width="34" height="28" viewBox="0 0 34 28"><path d="M1 3Q1 1.5 2.5 1.5H12L14 3.5H31.5Q33 3.5 33 5V25.5Q33 27 31.5 27H2.5Q1 27 1 25.5Z" fill="#f8d775"/><path d="M1 7H33V25.5Q33 27 31.5 27H2.5Q1 27 1 25.5Z" fill="#fde59a"/><rect x="3" y="3" width="8" height="1.5" fill="#fff"/><path d="M7 13H27V27H22V18H12V27H7Z" fill="#2ea7e8"/></svg>
<svg class="a" style="left:455px;top:1025px" width="60" height="50" viewBox="0 0 60 50"><g fill="#0aaff0"><circle cx="26.5" cy="24.5" r="15.8"/><circle cx="19.5" cy="16.5" r="8.3"/><circle cx="33.5" cy="32.5" r="8.3"/></g><g fill="#fff"><circle cx="26.5" cy="24.5" r="14.2"/><circle cx="19.5" cy="16.5" r="6.7"/><circle cx="33.5" cy="32.5" r="6.7"/></g><text x="26.8" y="33.6" font-size="25" font-weight="bold" fill="#0aaff0" text-anchor="middle" font-family="Liberation Sans">S</text><circle cx="39" cy="37" r="8.6" fill="#6cb010" stroke="#f4f4f4" stroke-width="1.7"/><path d="M35.5 37.2L38.2 39.8L42.8 34.8" fill="none" stroke="#fff" stroke-width="1.9"/></svg>
<svg class="a" style="left:540px;top:1033px" width="34" height="32" viewBox="0 0 34 32"><rect x="12" y="3.5" width="21" height="25" fill="#fff"/><path d="M14 7H31M14 11H31M14 15H31M14 19H31M14 23H31M22 5V27" stroke="#1e7145" stroke-width="1.5"/><path d="M0 4L20 0V32L0 28Z" fill="#1e7145"/><path d="M4 9.5H8L10 14L12 9.5H16L12 16L16 22.5H12L10 18L8 22.5H4L8 16Z" fill="#fff"/></svg>
<svg class="a" style="left:616px;top:1033px" width="38" height="39" viewBox="0 0 38 39"><rect x="13" y="8" width="18" height="15" fill="#0f72c6"/><path d="M13 8L22 15L31 8" fill="none" stroke="#fff" stroke-width="1.6"/><path d="M0 4L17 0V35L0 31Z" fill="#0f72c6"/><ellipse cx="8.5" cy="17.5" rx="4.2" ry="5.8" fill="none" stroke="#fff" stroke-width="2.6"/><rect x="15" y="21" width="22" height="17" fill="#e8b86b"/><path d="M15 21L26 30L37 21" fill="none" stroke="#fff" stroke-width="1.5"/></svg>
<svg class="a" style="left:690px;top:1033px" width="40" height="40" viewBox="0 0 40 40"><path d="M16 1A15 15 0 1 1 8.5 29L1 31L3.5 24A15 15 0 0 1 16 1Z" fill="#fff"/><circle cx="16" cy="16" r="12.6" fill="#2fb743"/><path d="M10 9Q8 11 9.5 15Q12 21 18 23.5Q21.5 24.5 23 22L22.5 20L19.5 18.5L18 20Q14 18.5 12 14L13.5 12.5L12 9Z" fill="#fff"/><circle cx="26" cy="25.5" r="10.8" fill="#e60b14"/><text x="26" y="32" font-size="18" fill="#fff" text-anchor="middle" font-family="Liberation Sans">3</text></svg>
<svg class="a" style="left:768px;top:1032px" width="28" height="36" viewBox="0 0 28 36"><rect x="1.3" y="1.3" width="25.4" height="33.4" fill="none" stroke="#fff" stroke-width="2.6"/><rect x="5" y="5" width="18" height="5.5" fill="none" stroke="#fff" stroke-width="1.6"/><path d="M5 15H23V31H5Z" fill="#fff"/><path d="M8 18L6 20M13 18L11 20M18 18L16 20M23 18L21 20M8 23L6 25M13 23L11 25M18 23L16 25M23 23L21 25M8 28L6 30M13 28L11 30M18 28L16 30M23 28L21 30" stroke="#1b1a16" stroke-width="1.8"/></svg>
<svg class="a" style="left:842px;top:1035px" width="30" height="30" viewBox="0 0 30 30"><path d="M9.60 5.65 L11.48 4.79 L11.78 1.07 L18.22 1.07 L18.52 4.79 L20.40 5.65 L22.09 6.85 L25.46 5.25 L28.68 10.82 L25.60 12.94 L25.80 15.00 L25.60 17.06 L28.68 19.18 L25.46 24.75 L22.09 23.15 L20.40 24.35 L18.52 25.21 L18.22 28.93 L11.78 28.93 L11.48 25.21 L9.60 24.35 L7.91 23.15 L4.54 24.75 L1.32 19.18 L4.40 17.06 L4.20 15.00 L4.40 12.94 L1.32 10.82 L4.54 5.25 L7.91 6.85Z" fill="#fff"/><circle cx="15" cy="15" r="5.5" fill="#1b1a16"/></svg>
<svg class="a" style="left:913px;top:1033px" width="40" height="38" viewBox="0 0 40 38"><circle cx="22" cy="5.5" r="5" fill="#7b83eb"/><circle cx="31" cy="8" r="4" fill="#5059c9"/><rect x="26" y="13" width="10" height="14" rx="3" fill="#5059c9"/><rect x="14" y="12" width="16" height="20" rx="4" fill="#7b83eb"/><rect x="0" y="9" width="19" height="19" rx="1.5" fill="#4b53bc"/><path d="M4 13H15V15.5H11V24H8V15.5H4Z" fill="#fff"/><circle cx="31" cy="30" r="7.5" fill="#5cb82b" stroke="#fff" stroke-width="1.6"/><path d="M27.5 30L30 32.5L34.5 27.5" fill="none" stroke="#fff" stroke-width="2"/></svg>
<svg class="a" style="left:985px;top:1030px" width="45" height="40" viewBox="0 0 45 40"><ellipse cx="21" cy="20.5" rx="16.5" ry="11.5" transform="rotate(-28 21 20.5)" fill="#b9daf0"/><circle cx="11.5" cy="29.5" r="3.2" fill="#1c1719"/><circle cx="10.3" cy="20.9" r="2.6" fill="#e53935"/><circle cx="15.8" cy="15.4" r="2.6" fill="#43a047"/><circle cx="22.7" cy="12.5" r="2.6" fill="#fbc02d"/><circle cx="19" cy="23.1" r="1.6" fill="#1c1719"/><path d="M21.6 36.6L33 11" stroke="#f0932b" stroke-width="2.6" stroke-linecap="round"/><path d="M33 11L35 6.5" stroke="#aaa" stroke-width="2.6"/><path d="M33.5 6.5L31 3.5Q36 0.5 40 5L37.5 8.5Z" fill="#d8b070"/></svg>
<svg class="a" style="left:1065px;top:1033px" width="34" height="34" viewBox="0 0 34 34">
<path d="M17 17L2.71 8.75A16.5 16.5 0 0 1 31.29 8.75Z" fill="#db4437"/>
<path d="M17 17L31.29 8.75A16.5 16.5 0 0 1 17 33.5Z" fill="#f4b400"/>
<path d="M17 17L17 33.5A16.5 16.5 0 0 1 2.71 8.75Z" fill="#0f9d58"/>
<circle cx="17" cy="17" r="7.8" fill="#fff"/><circle cx="17" cy="17" r="6.2" fill="#4285f4"/></svg>
<svg class="a" style="left:1079px;top:1047px" width="25" height="25" viewBox="0 0 25 25"><clipPath id="av"><circle cx="12.5" cy="12.5" r="12"/></clipPath><g clip-path="url(#av)"><rect width="25" height="25" fill="#c9d2e6"/><rect y="19" width="25" height="6" fill="#4ec9c0"/><path d="M9 5L10.5 9H14L15.5 5L16 11Q16.5 14 15 16L16 20H8.5L9.5 16Q8 14 8.5 11Z" fill="#9b8060"/></g></svg>
<svg class="a" style="left:1384px;top:1037px" width="24" height="25" viewBox="0 0 24 25"><circle cx="16.5" cy="5" r="3.8" fill="none" stroke="#fff" stroke-width="1.4"/><path d="M9.5 15Q11 9.5 16.5 9.5Q22.5 9.5 23 15" fill="none" stroke="#fff" stroke-width="1.4"/><circle cx="8" cy="12" r="3.8" fill="none" stroke="#fff" stroke-width="1.4"/><path d="M1 24Q1.5 16.5 8 16.5Q14.5 16.5 15 24" fill="none" stroke="#fff" stroke-width="1.4"/></svg>
<svg class="a" style="left:1446px;top:1043px" width="21" height="13" viewBox="0 0 21 13"><path d="M1 12L10.5 1.5L20 12" fill="none" stroke="#fff" stroke-width="1.5"/></svg>
<svg class="a" style="left:1490px;top:1041px" width="28" height="18" viewBox="0 0 28 18"><path d="M4 17Q0 17 0.5 13Q1 10 4.5 10Q5.5 4 11.5 3.5Q16 3.5 18 7Q23 6 25 10Q28 11 27.5 14Q27 17 24 17Z" fill="#1a8ee0"/><path d="M4 17Q0 17 0.5 13Q1 10.5 4.5 10.5Q9 9 12 12.5Q17 9 21.5 11Q27 11 27.5 14Q27 17 24 17Z" fill="#2ca7ee"/></svg>
<svg class="a" style="left:1538px;top:1039px" width="28" height="19" viewBox="0 0 28 19"><rect x="6" y="4" width="19" height="13" fill="none" stroke="#fff" stroke-width="1.4"/><rect x="25" y="7.5" width="2.5" height="6" fill="#fff"/><rect x="8.5" y="6.5" width="14" height="8" fill="#fff"/><path d="M2 1V5M5 1V5M1 5H6V8Q6 10 3.5 10Q1 10 1 8Z M3.5 10V17" stroke="#fff" stroke-width="1.2" fill="#fff"/></svg>
<svg class="a" style="left:1590px;top:1040px" width="22" height="21" viewBox="0 0 22 21"><path d="M1 19.5A19 19 0 0 1 20 1" fill="none" stroke="#ccc" stroke-width="1.3"/><path d="M5 19.5A15 15 0 0 1 20 5" fill="none" stroke="#ccc" stroke-width="1.3"/><path d="M9 19.5A11 11 0 0 1 20 9" fill="none" stroke="#ccc" stroke-width="1.3"/><path d="M13 19.5A7 7 0 0 1 20 13" fill="none" stroke="#ccc" stroke-width="1.3"/><circle cx="18.5" cy="18" r="2" fill="#fff"/></svg>
<svg class="a" style="left:1635px;top:1040px" width="26" height="20" viewBox="0 0 26 20"><path d="M1.5 6.5H6L11.5 1.5V18.5L6 13.5H1.5Z" fill="none" stroke="#fff" stroke-width="1.4"/><path d="M15 6.5Q17 10 15 13.5M18.5 4Q22 10 18.5 16M22 1.5Q27 10 22 18.5" fill="none" stroke="#fff" stroke-width="1.4"/></svg>
<div class="t" style="left:1681px;top:1042.5px;font-size:16.5px;color:#fff">ENG</div>
<div class="t" style="left:1732px;top:1028.5px;width:100px;text-align:center;font-size:17px;color:#fff">20:41</div>
<div class="t" style="left:1733px;top:1056px;width:100px;text-align:center;font-size:17px;color:#fff;letter-spacing:0.6px">16/04/2020</div>
<svg class="a" style="left:1856px;top:1037px" width="40" height="38" viewBox="0 0 40 38"><path d="M1 1H26V20H12L7 25V20H1Z" fill="#fff"/><path d="M5.5 6H21.5M5.5 10H21.5M5.5 14H17" stroke="#333" stroke-width="1.3"/><circle cx="25.5" cy="25" r="11.5" fill="#2e2e2e" stroke="#9a9a9a" stroke-width="1.5"/><text x="25.5" y="31.5" font-size="18" fill="#fff" text-anchor="middle" font-family="Liberation Sans">6</text></svg>
<div class="a" style="left:1912px;top:1020px;width:1px;height:60px;background:#6b6470"></div>
</body></html>
